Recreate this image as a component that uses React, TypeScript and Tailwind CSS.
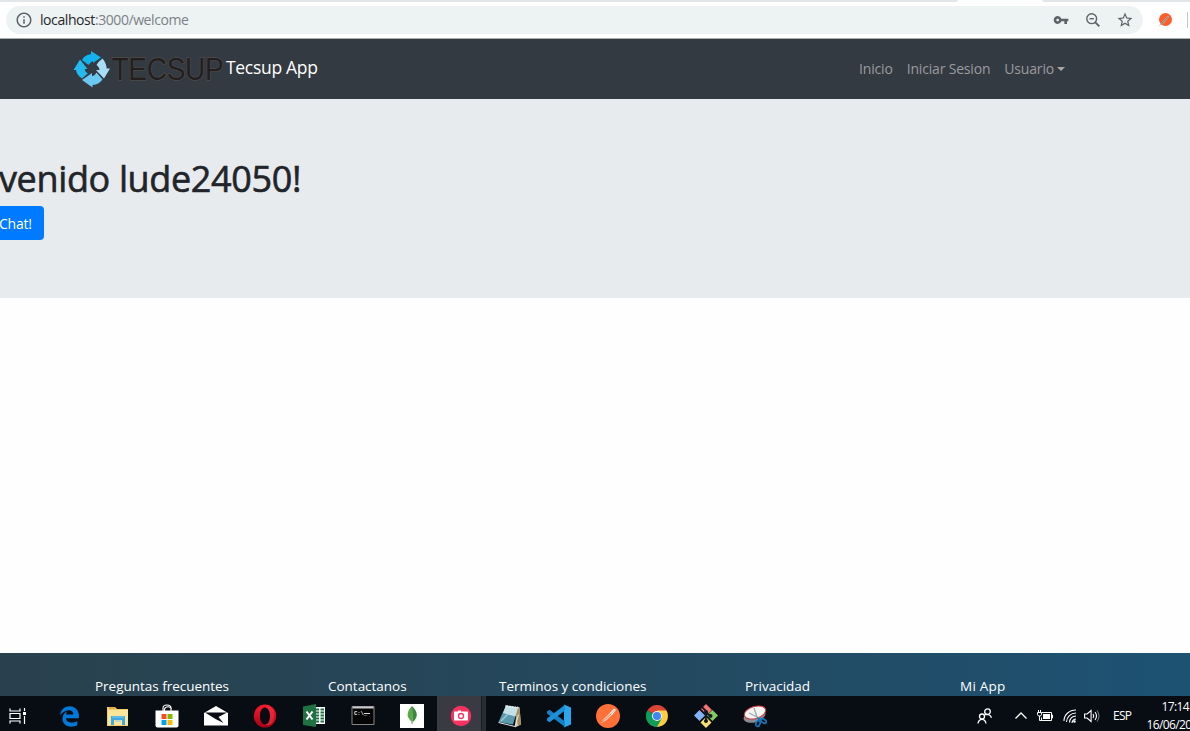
import type { ReactNode } from "react";
import { MdInfoOutline, MdStarBorder, MdVpnKey } from "react-icons/md";
import { FaEdgeLegacy } from "react-icons/fa";

function Postman({ className }: { className: string }) {
  return (
    <svg viewBox="0 0 24 24" className={className}>
      <circle cx="12" cy="12" r="12" fill="#ff6f38" />
      <path d="M4.500 19.500l3.500-5 6.500-6 2 2L10 16.500z" fill="#ffd9c7" />
      <path d="M6 18l9.500-8.500" stroke="#e8642e" strokeWidth=".8" />
      <path d="M14 9l4-4.500L20 6l-4 5z" fill="#fff" />
      <path d="M15 10l3.500-4" stroke="#ff6c37" strokeWidth=".7" />
    </svg>
  );
}

function ExtensionBadge() {
  return (
    <svg viewBox="0 0 14 14" className="ml-[15px] size-[14px]">
      <circle cx="7.500" cy="6.500" r="6.500" fill="#ff5c28" />
      <path d="M.8 13L4 9l6-6.500 1.300 1.300L6 10z" fill="#b4a99f" />
      <path d="M3 11l7-7" stroke="#777" strokeWidth=".7" />
    </svg>
  );
}

function AddressBar() {
  return (
    <header className="flex h-[39px] flex-col border-b border-[#a9aeab] bg-white">
      <div className="flex h-[2px] shrink-0 bg-[#e2e6e9]">
        <span className="ml-[957px] h-[2px] w-[86px] rounded-t bg-white" />
      </div>
      <div className="flex flex-1 items-center">
        <div className="ml-1.5 flex h-7 w-[1137px] items-center rounded-full bg-[#edf2f3] px-[9px] text-[#5f6368]">
          <MdInfoOutline className="size-[18px]" />
          <span className="ml-[7px] flex-1 pb-px text-[14px] tracking-[-0.42px] text-[#7c8186]">
            <span className="text-[#26292c]">localhost</span>:3000/welcome
          </span>
          <MdVpnKey className="mr-4 size-4" />
          <svg viewBox="0 0 16 16" className="mr-[15px] size-4" fill="none" stroke="currentColor" strokeWidth="1.400">
            <circle cx="6.700" cy="6.700" r="4.900" />
            <path d="M4.500 6.700h4.400" />
            <path d="M10.300 10.300l4 4" strokeWidth="1.900" />
          </svg>
          <MdStarBorder className="size-[18px]" />
        </div>
        <ExtensionBadge />
        <span className="ml-[15px] h-4 w-px bg-[#c4c7ca]" />
      </div>
    </header>
  );
}

function Logo() {
  return (
    <svg viewBox="0 0 152 40" className="h-10 w-[152px] overflow-visible">
      <path d="M8 11c2-4 5-5 9-6V2l10 6.500-8 5.500v-2c-2 1-3 2-4.500 4z" fill="#12b2ee" />
      <path d="M24.500 13l4-3.500c2.500 3 4 6 4.200 10H36l-6 10-8-8.500h3.500c0-2-1-3-3-5z" fill="#a9dcf5" />
      <path d="M8 31l10-7v3c2 0 3-1 4.500-3.500l6 7C26 34 23 35.500 18.500 36v2.500z" fill="#6bc8f1" />
      <path d="M6 10.500l7.500 9.500h-2.700c0 2 1 3.200 3 4.500L8 29.500C4.500 27 2.700 25 2 21H-.5z" fill="#23baf0" />
      <text
        x="37.500" y="30.800" textLength="112" lengthAdjust="spacingAndGlyphs"
        className="font-['Liberation_Sans'] text-[31px]"
        fill="#231f20" stroke="#4c4c48" strokeWidth="1.400" paintOrder="stroke"
      >
        TECSUP
      </text>
    </svg>
  );
}

function Navbar() {
  return (
    <nav className="flex h-[60px] items-center bg-[#343a42] pl-[74px] pr-[125px]">
      <a className="flex items-center text-[17.500px] tracking-[-0.3px] text-white">
        <Logo />
        <span className="pb-[4px]">Tecsup App</span>
      </a>
      <ul className="ml-auto flex gap-[14px] pb-px text-[14px] tracking-[-0.18px] text-[#9a9b9e]">
        <li>Inicio</li>
        <li>Iniciar Sesion</li>
        <li className="flex items-center">
          Usuario
          <span className="ml-[3px] border-x-[4.500px] border-t-[4.500px] border-x-transparent border-t-[#aaa7a6]" />
        </li>
      </ul>
    </nav>
  );
}

function Welcome() {
  return (
    <section className="flex h-[199px] flex-col items-start bg-[#e8ebee] pt-[59px]">
      <h1 className="-ml-px h-[48px] whitespace-nowrap text-[36px] font-medium leading-[42px] tracking-[-0.36px] text-[#212529] [-webkit-text-stroke:0.6px_#212529]">
        venido lude24050!
      </h1>
      <button className="flex h-[34px] w-11 items-center rounded-r bg-[#007bff] text-[14px] tracking-[-0.2px] text-white">
        <span className="-ml-px">Chat!</span>
      </button>
    </section>
  );
}

function Footer() {
  return (
    <footer className="flex h-[43px] items-end bg-linear-to-r from-[#29414d] via-[#24485d] to-[#1d5273] text-[13.500px] leading-5 tracking-[-0.02px] text-white">
      <span className="ml-[95px] w-[233px]">Preguntas frecuentes</span>
      <span className="w-[171px]">Contactanos</span>
      <span className="w-[246px]">Terminos y condiciones</span>
      <span className="w-[215px]">Privacidad</span>
      <span className="tracking-[0.25px]">Mi App</span>
    </footer>
  );
}

function Icon({ children }: { children: ReactNode }) {
  return <svg viewBox="0 0 24 24" fill="none" className="size-6">{children}</svg>;
}

const apps: ReactNode[] = [
  <FaEdgeLegacy className="ml-px size-[21px] text-[#0078d7]" />,
  <Icon>
    <path d="M1 3h8l2 2h11v17H1z" fill="#f5ce6a" />
    <path d="M2 6h20v15H2z" fill="#fde49b" />
    <path d="M3 4h6" stroke="#dba333" strokeWidth="1.500" />
    <path d="M5 12h14v9h-3v-5H8v5H5z" fill="#3fa9df" />
    <path d="M6 13h12M9 17h6" stroke="#7bcdf0" />
  </Icon>,
  <Icon>
    <path d="M8 7V4c0-4 8-4 8 0v3M9.500 7V5c1-3 6-3 7 0" stroke="#fff" strokeWidth="1.100" />
    <path d="M.5 6.500h23v15a2 2 0 0 1-2 2h-19a2 2 0 0 1-2-2z" fill="#fff" />
    <path d="M6.500 10h5v5h-5z" fill="#f25022" />
    <path d="M12.500 10h5v5h-5z" fill="#7fba00" />
    <path d="M6.500 16h5v5h-5z" fill="#00a4ef" />
    <path d="M12.500 16h5v5h-5z" fill="#ffb900" />
  </Icon>,
  <Icon>
    <path d="M0 9l12-7 12 7v12.500H0z" fill="#fff" />
    <path d="M1 8.500h22l-8.500 4.500 5 6-8-4z" fill="#090d13" />
  </Icon>,
  <Icon>
    <defs><linearGradient id="opera" x1="0" y1="0" x2="0" y2="1"><stop stopColor="#ff1b2d" /><stop offset="1" stopColor="#a70014" /></linearGradient></defs>
    <path fillRule="evenodd" d="M12 .5a11.200 11.500 0 1 0 0 23 11.200 11.500 0 0 0 0-23zm0 3c3 0 5 3.500 5 8.500s-2 8.500-5 8.500-5-3.500-5-8.500 2-8.500 5-8.500z" fill="url(#opera)" />
    <path d="M12 3.500c8-3 9 4 9 8.500s-2 11-9 8.500c3 0 5-3.500 5-8.500s-2-8.500-5-8.500z" fill="#ed3142" opacity=".65" />
  </Icon>,
  <Icon>
    <path d="M12 3h11v17H12z" fill="#fff" />
    <path d="M14 5.500h3m1.500 0H22M14 8.500h3m1.500 0H22M14 11.500h3m1.500 0H22M14 14.500h3m1.500 0H22M14 17.500h3m1.500 0H22" stroke="#207245" strokeWidth="1.800" />
    <path d="M1 2.500L14 0v23L1 21z" fill="#207245" />
    <path d="M4.500 7.500l6 8m0-8l-6 8" stroke="#fff" strokeWidth="2" />
  </Icon>,
  <Icon>
    <path d="M1 2.500h22v18H1z" fill="#050505" stroke="#858585" />
    <path d="M1.500 3.500h21" stroke="#c8c9ca" strokeWidth="2" />
    <text x="3" y="11" fill="#eee" className="font-['Liberation_Mono'] text-[5.500px] font-bold">C:\_</text>
    <path d="M13 9.500h6" stroke="#ddd" />
  </Icon>,
  <Icon>
    <path d="M0 0h24v24H0z" fill="#fff" />
    <path d="M12 2c-4 4-5 8-4 11 1 2 2 3 3.500 4.500V20h1v-2.500z" fill="#58a947" />
    <path d="M12 2c4 4 6 8 4 12-1 2-2 3-3.500 4z" fill="#3d873c" />
  </Icon>,
  <Icon>
    <circle cx="12" cy="12" r="10.200" fill="#fb315f" />
    <path d="M6 7.500h3V6.500h3v1h7v9H5v-9z" fill="#fff" />
    <circle cx="12" cy="12" r="2.500" stroke="#fb315f" strokeWidth="1.300" />
  </Icon>,
  <Icon>
    <path d="M19 2.500l2.500 1 1.500 17-6 3z" fill="#d8c9ab" />
    <path d="M21.500 3.500L23 20.500l-3 1-3-15z" fill="#a98e60" />
    <path d="M8 1.500l12 2-5 17L.5 18z" fill="#5b99ad" />
    <path d="M8 1.500l12 2-2.500 9L5 9z" fill="#c5e1e8" />
    <path d="M7.500 1.800l13 2" stroke="#eef4f4" strokeWidth="1.600" strokeDasharray="1 .6" />
    <path d="M.5 18.500L17 22.500l3.500-12" stroke="#e2edef" />
    <path d="M3 17L13 7" stroke="#b8dae2" strokeWidth="1.500" opacity=".7" />
  </Icon>,
  <Icon>
    <path d="M17 .5l7 3v17l-7 3z" fill="#2aa7ef" />
    <path d="M0 7.500l2.500-1.700L18 17.500V23L0 9.500z" fill="#1681c7" />
    <path d="M0 16.500l2.500 1.700L18 6.500V.8L0 14.500z" fill="#1c91d9" />
  </Icon>,
  <Postman className="size-6" />,
  <Icon>
    <path d="M12 12L2.500 6.500A11 11 0 0 1 21.500 6.500z" fill="#db4437" />
    <path d="M12 12l9.500-5.500A11 11 0 0 1 12 23z" fill="#ffcd40" />
    <path d="M12 12v11A11 11 0 0 1 2.500 6.500z" fill="#0f9d58" />
    <path d="M12 6.500h9.500L16.500 14 12 23v-6z" fill="#ffcd40" />
    <path d="M2.500 6.500L7.500 15l4.500 2 5-3-5 9A11 11 0 0 1 2.500 6.500z" fill="#0f9d58" />
    <circle cx="12" cy="12" r="5" fill="#f1f1f1" />
    <circle cx="12" cy="12" r="4" fill="#4285f4" />
  </Icon>,
  <Icon>
    <path d="M12 0l6 6-5 5-6-6z" fill="#f57373" />
    <path d="M5.500 6L11 11.500 5.500 17 0 11.500z" fill="#80b3f6" />
    <path d="M18.500 6L24 11.500 18.500 17 13 11.500z" fill="#83cc65" />
    <path d="M12 13l5.500 5.500L12 24l-5.500-5.500z" fill="#f9df76" />
    <path d="M8 3l4 4v11M12 8l4 4" stroke="#151820" strokeWidth="1.800" />
    <circle cx="12" cy="8" r="2" fill="#151820" />
    <circle cx="16.500" cy="12" r="2" fill="#151820" />
    <circle cx="12" cy="17" r="2" fill="#151820" />
  </Icon>,
  <Icon>
    <ellipse cx="11.500" cy="12" rx="11.300" ry="6.200" transform="rotate(-17 11.500 12)" fill="#8b8b90" />
    <ellipse cx="12" cy="8.500" rx="11" ry="6" transform="rotate(-17 12 8.500)" fill="#f4f4f5" stroke="#d33840" />
    <path d="M11 4l4 12M6 9l12 6" stroke="#a2a5a9" strokeWidth="1.300" />
    <ellipse cx="15" cy="19.500" rx="2" ry="3" transform="rotate(20 15 19.500)" stroke="#1477bd" strokeWidth="1.700" />
    <ellipse cx="20.500" cy="17" rx="3" ry="1.800" transform="rotate(30 20.500 17)" stroke="#1477bd" strokeWidth="1.700" />
    <path d="M15.500 17l-.5-3 4 2" stroke="#1477bd" strokeWidth="1.500" />
  </Icon>,
];

function Taskbar() {
  return (
    <div className="flex h-[35px] overflow-hidden bg-[#080d13] text-white">
      <div className="flex w-[45px] items-center pl-[9px] pt-1">
        <svg viewBox="0 0 18 16" className="h-4 w-[18px]" fill="none" stroke="white" strokeWidth="1.200">
          <path d="M1 .5V3h10V.5M1 15.500V13h10v2.500M1 5.500h10v5H1zM15.500 0v3M15.500 8v8" />
          <path d="M14 4h3v3h-3z" fill="white" stroke="none" />
        </svg>
      </div>
      {apps.map((icon, i) => (
        <div key={i} className={i === 8 ? "flex w-[49px] bg-[#2a2c33]" : "flex w-[49px]"}>
          <div className={i === 8 ? "flex w-[45px] items-center justify-center border-r border-[#171b20] bg-[#393a42] pl-[3px] pt-[5px]" : "flex w-[49px] items-center justify-center pr-[2px] pt-[5px]"}>{icon}</div>
        </div>
      ))}
      <div className="ml-auto flex w-[213px] shrink-0 items-center">
        <svg viewBox="0 0 16 16" className="mt-1 size-4 shrink-0" fill="none" stroke="white" strokeWidth="1.300">
          <circle cx="10.500" cy="3.700" r="2.800" /><circle cx="5" cy="8.500" r="2.500" />
          <path d="M7.500 6.800c3-1 6 0 7 3M1 15.500c1-5.500 7-5.500 8 0" />
        </svg>
        <svg viewBox="0 0 12 8" className="ml-[22px] mt-1 h-2 w-3 shrink-0" fill="none" stroke="white" strokeWidth="1.300"><path d="M.5 6.500L6 1l5.500 5.500" /></svg>
        <svg viewBox="0 0 16 12" className="ml-[10px] mt-1 h-3 w-4 shrink-0" fill="none" stroke="white">
          <path d="M5 2.500h9.500v8H4.500v-3M14.500 5H15.500v3h-1M1.500 0v2M3.500 0v2M.5 2.500h4v2l-1 1.500h-2l-1-1.500zM2.500 6v4.500h2" />
          <path d="M6 4h7v5H6z" fill="white" stroke="none" />
        </svg>
        <svg viewBox="0 0 14 14" className="ml-[10px] mt-1 size-[14px] shrink-0" fill="none" stroke="white" strokeWidth="1.100">
          <path d="M1 12C1 6 6 1 13 1M3.500 13C3.500 8 8 4 13 4M6.500 13.500C6.500 10 9 7 13 7M9 14c0-2 2-4 4-4" />
          <circle cx="11.500" cy="12.500" r="1.200" fill="white" stroke="none" />
        </svg>
        <svg viewBox="0 0 16 14" className="ml-[7px] mt-1 h-[14px] w-4 shrink-0" fill="none" stroke="white" strokeWidth="1.100">
          <path d="M.6 5h2.500l4-3.500v11L3.100 9H.6zM9 5q1.500 2 0 4M11 3q3 4 0 8" />
          <path d="M13 1.500q4 5.500 0 11" stroke="#70747a" />
        </svg>
        <span className="ml-[13px] mt-1 text-[12px] tracking-[-0.700px]">ESP</span>
        <div className="ml-[15px] flex h-full flex-col pt-[2px] text-[12px] leading-[18px] tracking-[-0.600px]">
          <span className="pl-[15px]">17:14</span>
          <span>16/06/2019</span>
        </div>
      </div>
    </div>
  );
}

export default function App() {
  return (
    <div className="flex h-[731px] w-[1190px] flex-col overflow-hidden bg-white font-['Open_Sans','Noto_Sans',sans-serif]">
      <AddressBar />
      <Navbar />
      <Welcome />
      <main className="flex-1 bg-[#fefefe]" />
      <Footer />
      <Taskbar />
    </div>
  );
}
